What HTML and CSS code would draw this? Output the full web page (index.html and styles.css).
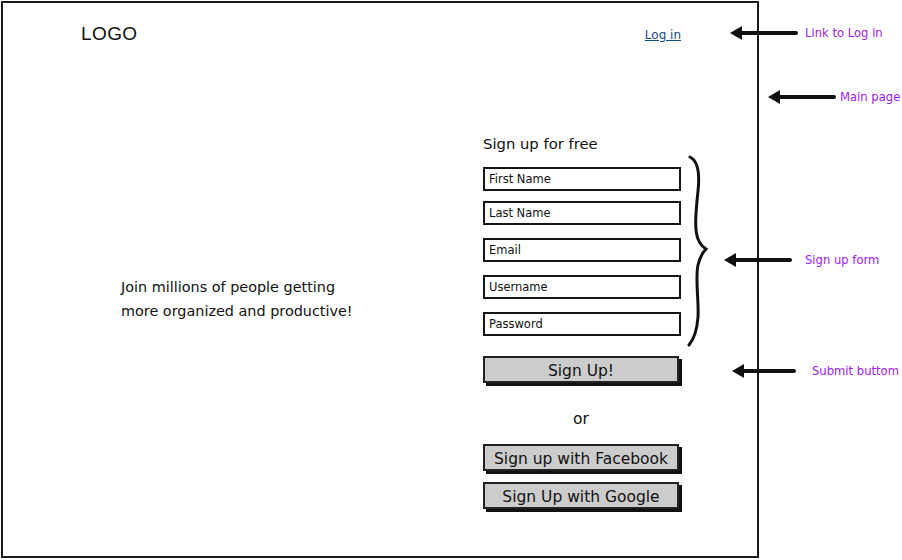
FILE: index.html
```html
<!DOCTYPE html>
<html>
<head>
<meta charset="utf-8">
<link rel="stylesheet" href="styles.css">
</head>
<body>
<div class="canvas">
  <div class="frame">
    <header class="top">
      <div class="logo">LOGO</div>
      <a class="login" href="#">Log in</a>
    </header>
    <div class="main">
      <div class="intro">
        <p>Join millions of people getting<br>more organized and productive!</p>
      </div>
      <div class="signup">
        <h2 class="title">Sign up for free</h2>
        <div class="fields">
          <div class="field f-first">First Name</div>
          <div class="field">Last Name</div>
          <div class="field">Email</div>
          <div class="field">Username</div>
          <div class="field">Password</div>
        </div>
        <div class="btn btn-main">Sign Up!</div>
        <div class="or">or</div>
        <div class="btn">Sign up with Facebook</div>
        <div class="btn">Sign Up with Google</div>
      </div>
    </div>
  </div>

  <svg class="brace" width="30" height="192" viewBox="0 0 30 192">
    <path d="M4 2 C12 6 14 18 12 36 C10 56 8 74 12 84 C14 89 17 92 20 94 C16 98 14 102 12 110 C9 124 13 146 12 162 C11 176 8 184 3 190" fill="none" stroke="#111" stroke-width="3" stroke-linecap="round"/>
  </svg>

  <div class="note n1">
    <svg class="arrow" width="68" height="14" viewBox="0 0 68 14"><path d="M0 7 L12 0 L12 14 Z" fill="#111"/><line x1="10" y1="7" x2="66" y2="7" stroke="#111" stroke-width="4" stroke-linecap="round"/></svg>
    <span class="label">Link to Log in</span>
  </div>
  <div class="note n2">
    <svg class="arrow" width="68" height="14" viewBox="0 0 68 14"><path d="M0 7 L12 0 L12 14 Z" fill="#111"/><line x1="10" y1="7" x2="66" y2="7" stroke="#111" stroke-width="4" stroke-linecap="round"/></svg>
    <span class="label">Main page</span>
  </div>
  <div class="note n3">
    <svg class="arrow" width="68" height="14" viewBox="0 0 68 14"><path d="M0 7 L12 0 L12 14 Z" fill="#111"/><line x1="10" y1="7" x2="66" y2="7" stroke="#111" stroke-width="4" stroke-linecap="round"/></svg>
    <span class="label">Sign up form</span>
  </div>
  <div class="note n4">
    <svg class="arrow" width="64" height="14" viewBox="0 0 64 14"><path d="M0 7 L12 0 L12 14 Z" fill="#111"/><line x1="10" y1="7" x2="62" y2="7" stroke="#111" stroke-width="4" stroke-linecap="round"/></svg>
    <span class="label">Submit buttom</span>
  </div>
</div>
</body>
</html>
```

FILE: styles.css
```css
* { box-sizing: border-box; }
html, body { margin: 0; padding: 0; background: #fff; }
body {
  width: 902px;
  height: 560px;
  overflow: hidden;
  font-family: "DejaVu Sans", "Open Sans", sans-serif;
  color: #111;
}
.canvas {
  position: relative;
  width: 902px;
  height: 560px;
  padding: 1px 0 0 1px;
}
.frame {
  width: 758px;
  height: 557px;
  border: 2px solid #1a1a1a;
  background: #fff;
}
.top {
  display: flex;
  justify-content: space-between;
  align-items: baseline;
  padding: 20px 76px 0 78px;
  height: 128px;
}
.logo {
  font-family: "Liberation Sans", Arial, sans-serif;
  font-size: 19px;
  letter-spacing: 0.4px;
  color: #111;
}
.login {
  font-size: 12px;
  color: #174a8b;
  text-decoration: underline;
  position: relative;
  top: -1px;
}
.main {
  display: grid;
  grid-template-columns: 480px 198px;
}
.intro {
  padding: 144px 0 0 118px;
}
.intro p {
  margin: 0;
  font-size: 14.4px;
  line-height: 24px;
  color: #111;
}
.signup {
  display: flex;
  flex-direction: column;
}
.title {
  margin: 1px 0 11px;
  font-weight: normal;
  font-size: 14.8px;
  line-height: 24px;
}
.fields {
  display: flex;
  flex-direction: column;
  gap: 13px;
}
.fields .field:nth-child(2) { margin-top: -3px; }
.field {
  height: 24px;
  width: 198px;
  border: 2px solid #151515;
  font-size: 11.5px;
  line-height: 20px;
  padding-left: 4px;
  color: #111;
}
.btn {
  width: 196px;
  height: 27px;
  background: #cccccc;
  border: 2px solid #222;
  box-shadow: 3px 3px 0 #111;
  font-size: 15.5px;
  line-height: 26px;
  text-align: center;
  color: #111;
  margin-bottom: 11px;
}
.btn-main {
  margin-top: 20px;
  margin-bottom: 0;
}
.or {
  text-align: center;
  font-size: 15.5px;
  line-height: 20px;
  margin: 26px 0 15px;
  padding-right: 2px;
}
.brace {
  position: absolute;
  left: 686px;
  top: 155px;
}
.note {
  position: absolute;
  display: flex;
  align-items: center;
}
.arrow { display: block; flex: none; }
.label {
  font-size: 11.6px;
  color: #a020f0;
  white-space: nowrap;
  margin-left: 7px;
}
.n1 { left: 730px; top: 26px; }
.n2 { left: 768px; top: 90px; }
.n2 .label { margin-left: 4px; }
.n3 { left: 724px; top: 253px; }
.n3 .label { margin-left: 13px; }
.n4 { left: 732px; top: 364px; }
.n4 .label { margin-left: 16px; }
```
